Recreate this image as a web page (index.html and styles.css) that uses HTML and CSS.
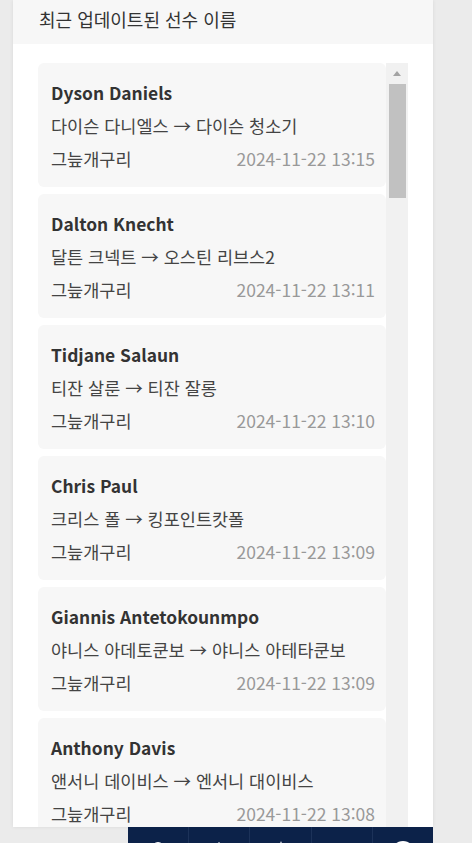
FILE: index.html
```html
<!DOCTYPE html>
<html lang="ko">
<head>
    <meta charset="UTF-8">
    <meta name="viewport" content="width=device-width, initial-scale=1.0">
    <title>최근 업데이트된 선수 이름</title>
    <link rel="stylesheet" href="styles.css">
</head>
<body>
    <div class="panel">
        <div class="panel-header">최근 업데이트된 선수 이름</div>
        <div class="list-wrap">
            <div class="update-list">
                <div class="update-card">
                    <div class="name">Dyson Daniels</div>
                    <div class="change">다이슨 다니엘스 → 다이슨 청소기</div>
                    <div class="meta"><span class="author">그늪개구리</span><span class="time">2024-11-22 13:15</span></div>
                </div>
                <div class="update-card">
                    <div class="name">Dalton Knecht</div>
                    <div class="change">달튼 크넥트 → 오스틴 리브스2</div>
                    <div class="meta"><span class="author">그늪개구리</span><span class="time">2024-11-22 13:11</span></div>
                </div>
                <div class="update-card">
                    <div class="name">Tidjane Salaun</div>
                    <div class="change">티잔 살룬 → 티잔 잘롱</div>
                    <div class="meta"><span class="author">그늪개구리</span><span class="time">2024-11-22 13:10</span></div>
                </div>
                <div class="update-card">
                    <div class="name">Chris Paul</div>
                    <div class="change">크리스 폴 → 킹포인트캇폴</div>
                    <div class="meta"><span class="author">그늪개구리</span><span class="time">2024-11-22 13:09</span></div>
                </div>
                <div class="update-card">
                    <div class="name">Giannis Antetokounmpo</div>
                    <div class="change">야니스 아데토쿤보 → 야니스 아테타쿤보</div>
                    <div class="meta"><span class="author">그늪개구리</span><span class="time">2024-11-22 13:09</span></div>
                </div>
                <div class="update-card">
                    <div class="name">Anthony Davis</div>
                    <div class="change">앤서니 데이비스 → 엔서니 대이비스</div>
                    <div class="meta"><span class="author">그늪개구리</span><span class="time">2024-11-22 13:08</span></div>
                </div>
            </div>
            <div class="scrollbar">
                <div class="scroll-up"></div>
                <div class="scroll-thumb"></div>
            </div>
        </div>
    </div>

    <nav class="bottom-nav">
        <a class="nav-item"><svg viewBox="0 0 24 24"><circle cx="12" cy="8" r="6" fill="#fff"/><path d="M2 23c0-5 4-8 10-8s10 3 10 8z" fill="#fff"/></svg></a>
        <a class="nav-item"><svg viewBox="0 0 24 24"><path d="M3 11 12 2l9 9v11h-6v-6H9v6H3z" fill="#fff"/></svg></a>
        <a class="nav-item"><svg viewBox="0 0 24 24"><path d="M12 1 15 9h8l-6.5 5 2.5 8-7-5-7 5 2.5-8L1 9h8z" fill="#fff"/></svg></a>
        <a class="nav-item"><svg viewBox="0 0 24 24"><rect x="3" y="8" width="18" height="3" rx="1.5" fill="#fff"/><rect x="3" y="13" width="18" height="3" rx="1.5" fill="#fff"/><rect x="3" y="18" width="18" height="3" rx="1.5" fill="#fff"/></svg></a>
        <a class="nav-item"><svg viewBox="0 0 24 24"><circle cx="12" cy="12" r="11" fill="#fff"/></svg></a>
    </nav>
</body>
</html>
```

FILE: styles.css
```css
body {
    font-family: "Noto Sans CJK KR", "Noto Sans", sans-serif;
    margin: 0;
    height: 100vh;
    overflow: hidden;
    background-color: #ebebeb;
}
.panel {
    width: 420px;
    height: 827px;
    margin-left: 13px;
    background-color: #fff;
    box-shadow: 0 0 4px rgba(0,0,0,0.08);
    display: flex;
    flex-direction: column;
}
.panel-header {
    background-color: #f7f7f7;
    color: #333;
    font-size: 18px;
    line-height: 24px;
    padding: 7px 26px 13px;
}
.list-wrap {
    flex: 1;
    min-height: 0;
    margin: 19px 25px 0 25px;
    display: flex;
    overflow: hidden;
}
.update-list { flex: 1; display: flex; flex-direction: column; gap: 7px; }
.update-card {
    background-color: #f7f7f7;
    border-radius: 6px;
    padding: 18px 11px 16px 13px;
    display: flex;
    flex-direction: column;
    gap: 9px;
}
.update-card .name { font-size: 17.4px; font-weight: bold; color: #333; line-height: 24px; }
.update-card .change { font-size: 17.5px; color: #444; line-height: 24px; }
.update-card .meta {
    display: flex;
    justify-content: space-between;
    font-size: 17.5px;
    line-height: 24px;
}
.update-card .author { color: #444; }
.update-card .time { color: #999; }

/* 스크롤바 */
.scrollbar { width: 22px; flex-shrink: 0; background-color: #f1f1f1; }
.scroll-up { height: 21px; display: flex; justify-content: center; align-items: center; }
.scroll-up::before {
    content: "";
    border-left: 4.5px solid transparent;
    border-right: 4.5px solid transparent;
    border-bottom: 5px solid #a3a3a3;
}
.scroll-thumb { height: 114px; margin: 0 2px 0 3px; background-color: #c1c1c1; }

.bottom-nav {
    position: fixed;
    left: 128px;
    top: 827px;
    width: 305px;
    height: 56px;
    background-color: #0c2249;
    display: flex;
}
.nav-item {
    flex: 1;
    display: flex;
    justify-content: center;
    padding-top: 13px;
    border-left: 1px solid #1c3259;
}
.nav-item:first-child { border-left: none; }
.nav-item svg { width: 24px; height: 24px; }
```
